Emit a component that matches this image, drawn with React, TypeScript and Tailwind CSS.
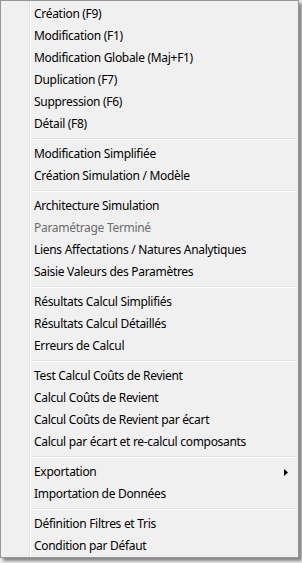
import React from "react";

type Item = { label: string; disabled?: boolean; sub?: boolean } | "sep";

const items: Item[] = [
  { label: "Création (F9)" },
  { label: "Modification (F1)" },
  { label: "Modification Globale (Maj+F1)" },
  { label: "Duplication (F7)" },
  { label: "Suppression (F6)" },
  { label: "Détail (F8)" },
  "sep",
  { label: "Modification Simplifiée" },
  { label: "Création Simulation / Modèle" },
  "sep",
  { label: "Architecture Simulation" },
  { label: "Paramétrage Terminé", disabled: true },
  { label: "Liens Affectations / Natures Analytiques" },
  { label: "Saisie Valeurs des Paramètres" },
  "sep",
  { label: "Résultats Calcul Simplifiés" },
  { label: "Résultats Calcul Détaillés" },
  { label: "Erreurs de Calcul" },
  "sep",
  { label: "Test Calcul Coûts de Revient" },
  { label: "Calcul Coûts de Revient" },
  { label: "Calcul Coûts de Revient par écart" },
  { label: "Calcul par écart et re-calcul composants" },
  "sep",
  { label: "Exportation", sub: true },
  { label: "Importation de Données" },
  "sep",
  { label: "Définition Filtres et Tris" },
  { label: "Condition par Défaut" },
];

export default function App() {
  return (
    <div
      className="w-[302px] h-[563px] bg-[#f0f0f0] overflow-hidden"
      style={{ fontFamily: '"Noto Sans", "Segoe UI", sans-serif' }}
    >
      <div className="w-[299px] h-[558px] border border-[#979797] bg-[#f0f0f0] shadow-[3px_3px_3px_rgba(0,0,0,0.45)] flex">
        <div className="w-[28px] shrink-0" />
        <div className="w-px bg-[#e2e3e3]" />
        <div className="w-px bg-white" />
        <div className="flex-1 flex flex-col pt-[2px]">
          {items.map((it, i) =>
            it === "sep" ? (
              <div key={i} className="h-[8px] flex flex-col justify-center mr-[1px]">
                <div className="h-px bg-[#e2e3e3]" />
                <div className="h-px bg-white" />
              </div>
            ) : (
              <div
                key={i}
                className={`h-[22px] flex items-center pl-[3px] pr-[10px] text-[12px] leading-none tracking-[-0.3px] ${
                  it.disabled ? "text-[#6d6d6d]" : "text-black"
                }`}
              >
                <span className="flex-1 whitespace-nowrap">{it.label}</span>
                {it.sub && (
                  <svg width="4" height="7" viewBox="0 0 4 7">
                    <polygon points="0,0 4,3.5 0,7" fill="#000" />
                  </svg>
                )}
              </div>
            )
          )}
        </div>
      </div>
    </div>
  );
}
